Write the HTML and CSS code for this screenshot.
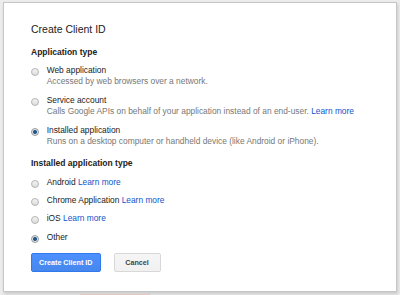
FILE: index.html
```html
<!DOCTYPE html>
<html lang="en">
<head>
    <meta charset="UTF-8">
    <meta name="viewport" content="width=device-width, initial-scale=1.0">
    <title>Create Client ID</title>
    <link rel="stylesheet" href="styles.css">
</head>
<body>
    <div class="dialog">
        <h1 class="dialog-title">Create Client ID</h1>

        <h2 class="section-title">Application type</h2>
        <div class="options">
            <label class="option">
                <input type="radio" name="app-type">
                <span class="option-text">
                    <span class="option-name">Web application</span>
                    <span class="option-desc">Accessed by web browsers over a network.</span>
                </span>
            </label>
            <label class="option">
                <input type="radio" name="app-type">
                <span class="option-text">
                    <span class="option-name">Service account</span>
                    <span class="option-desc">Calls Google APIs on behalf of your application instead of an end-user. <a href="#">Learn more</a></span>
                </span>
            </label>
            <label class="option">
                <input type="radio" name="app-type" checked>
                <span class="option-text">
                    <span class="option-name">Installed application</span>
                    <span class="option-desc">Runs on a desktop computer or handheld device (like Android or iPhone).</span>
                </span>
            </label>
        </div>

        <h2 class="section-title second">Installed application type</h2>
        <div class="options compact">
            <label class="option">
                <input type="radio" name="installed-type">
                <span class="option-name">Android <a href="#">Learn more</a></span>
            </label>
            <label class="option">
                <input type="radio" name="installed-type">
                <span class="option-name">Chrome Application <a href="#">Learn more</a></span>
            </label>
            <label class="option">
                <input type="radio" name="installed-type">
                <span class="option-name">iOS <a href="#">Learn more</a></span>
            </label>
            <label class="option">
                <input type="radio" name="installed-type" checked>
                <span class="option-name">Other</span>
            </label>
        </div>

        <div class="buttons">
            <button type="button" class="btn btn-primary">Create Client ID</button>
            <button type="button" class="btn">Cancel</button>
        </div>
    </div>
    <div class="behind-button"></div>
</body>
</html>
```

FILE: styles.css
```css
body {
    font-family: "Liberation Sans", Arial, sans-serif;
    margin: 0;
    padding: 0;
    background-color: #ececec;
    color: #222;
    overflow: hidden;
}
.dialog {
    margin: 2px 0 0 3px;
    width: 365px;
    height: 269px;
    padding: 19px 0 0 27px;
    background-color: #fff;
    border: 1px solid #c6c6c6;
    box-shadow: 1px 2px 3px rgba(0, 0, 0, 0.15);
}
.dialog-title {
    margin: 0;
    font-size: 10.5px;
    font-weight: normal;
    line-height: 14px;
}
.section-title {
    margin: 10px 0 0;
    font-size: 8.5px;
    font-weight: bold;
    line-height: 12px;
}
.section-title.second {
    margin-top: 9px;
}
.options {
    display: flex;
    flex-direction: column;
    gap: 6.5px;
    margin-top: 6px;
}
.options.compact {
    gap: 6.2px;
    margin-top: 7.6px;
}
.option {
    display: flex;
    align-items: flex-start;
    gap: 7.7px;
    font-size: 8.4px;
}
.option input {
    appearance: none;
    -webkit-appearance: none;
    flex: none;
    width: 8px;
    height: 8px;
    margin: 4px 0 0;
    border: 1px solid #b4b4b4;
    border-radius: 50%;
    background: linear-gradient(#f4f4f4, #dcdcdc);
    box-sizing: border-box;
}
.option input:checked {
    background: radial-gradient(circle, #1f4f7a 0, #2c6090 1.6px, #dfe6ec 2.4px, #e4e4e4 100%);
    border-color: #9a9a9a;
}
.option-text {
    display: flex;
    flex-direction: column;
}
.option-name {
    line-height: 12px;
    color: #222;
}
.option-desc {
    line-height: 11.5px;
    color: #777;
}
a {
    color: #15c;
    text-decoration: none;
}
.buttons {
    display: flex;
    gap: 13px;
    margin-top: 10px;
}
.btn {
    min-width: 47px;
    height: 19px;
    padding: 0 7px;
    font-family: inherit;
    font-size: 7.2px;
    font-weight: bold;
    color: #444;
    background: linear-gradient(#f5f5f5, #f1f1f1);
    border: 1px solid #d8d8d8;
    border-radius: 2px;
}
.btn-primary {
    color: #fff;
    background: linear-gradient(#4d90fe, #4787ed);
    border-color: #3079ed;
}
.behind-button {
    margin: 2px 0 0 80px;
    width: 70px;
    height: 6px;
    background-color: #e6c6c2;
}
```
